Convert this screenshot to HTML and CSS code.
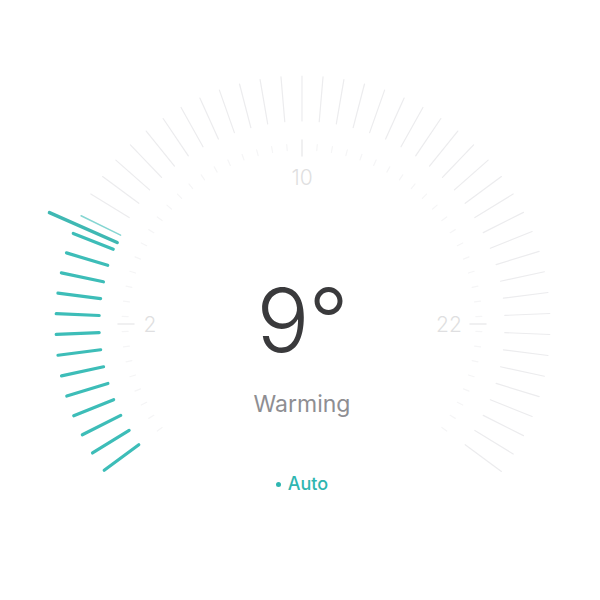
FILE: index.html
```html
<!DOCTYPE html>
<html>
<head>
<meta charset="utf-8">
<link rel="stylesheet" href="styles.css">
</head>
<body>
<div class="dial">
  <svg class="ticks" width="600" height="600" viewBox="0 0 600 600">
    <g transform="translate(302,324)">
      <g class="inner">
        <line x1="0" y1="-180" x2="0" y2="-174" transform="rotate(-126.486)"/>
        <line x1="0" y1="-180" x2="0" y2="-174" transform="rotate(-121.622)"/>
        <line x1="0" y1="-180" x2="0" y2="-174" transform="rotate(-116.757)"/>
        <line x1="0" y1="-180" x2="0" y2="-174" transform="rotate(-111.892)"/>
        <line x1="0" y1="-180" x2="0" y2="-174" transform="rotate(-107.027)"/>
        <line x1="0" y1="-180" x2="0" y2="-174" transform="rotate(-102.162)"/>
        <line x1="0" y1="-180" x2="0" y2="-174" transform="rotate(-97.297)"/>
        <line x1="0" y1="-180" x2="0" y2="-174" transform="rotate(-92.432)"/>
        <line x1="0" y1="-180" x2="0" y2="-174" transform="rotate(-87.568)"/>
        <line x1="0" y1="-180" x2="0" y2="-174" transform="rotate(-82.703)"/>
        <line x1="0" y1="-180" x2="0" y2="-174" transform="rotate(-77.838)"/>
        <line x1="0" y1="-180" x2="0" y2="-174" transform="rotate(-72.973)"/>
        <line x1="0" y1="-180" x2="0" y2="-174" transform="rotate(-68.108)"/>
        <line x1="0" y1="-180" x2="0" y2="-174" transform="rotate(-63.243)"/>
        <line x1="0" y1="-180" x2="0" y2="-174" transform="rotate(-58.378)"/>
        <line x1="0" y1="-180" x2="0" y2="-174" transform="rotate(-53.514)"/>
        <line x1="0" y1="-180" x2="0" y2="-174" transform="rotate(-48.649)"/>
        <line x1="0" y1="-180" x2="0" y2="-174" transform="rotate(-43.784)"/>
        <line x1="0" y1="-180" x2="0" y2="-174" transform="rotate(-38.919)"/>
        <line x1="0" y1="-180" x2="0" y2="-174" transform="rotate(-34.054)"/>
        <line x1="0" y1="-180" x2="0" y2="-174" transform="rotate(-29.189)"/>
        <line x1="0" y1="-180" x2="0" y2="-174" transform="rotate(-24.324)"/>
        <line x1="0" y1="-180" x2="0" y2="-174" transform="rotate(-19.459)"/>
        <line x1="0" y1="-180" x2="0" y2="-174" transform="rotate(-14.595)"/>
        <line x1="0" y1="-180" x2="0" y2="-174" transform="rotate(-9.730)"/>
        <line x1="0" y1="-180" x2="0" y2="-174" transform="rotate(-4.865)"/>
        <line x1="0" y1="-180" x2="0" y2="-174" transform="rotate(4.865)"/>
        <line x1="0" y1="-180" x2="0" y2="-174" transform="rotate(9.730)"/>
        <line x1="0" y1="-180" x2="0" y2="-174" transform="rotate(14.595)"/>
        <line x1="0" y1="-180" x2="0" y2="-174" transform="rotate(19.459)"/>
        <line x1="0" y1="-180" x2="0" y2="-174" transform="rotate(24.324)"/>
        <line x1="0" y1="-180" x2="0" y2="-174" transform="rotate(29.189)"/>
        <line x1="0" y1="-180" x2="0" y2="-174" transform="rotate(34.054)"/>
        <line x1="0" y1="-180" x2="0" y2="-174" transform="rotate(38.919)"/>
        <line x1="0" y1="-180" x2="0" y2="-174" transform="rotate(43.784)"/>
        <line x1="0" y1="-180" x2="0" y2="-174" transform="rotate(48.649)"/>
        <line x1="0" y1="-180" x2="0" y2="-174" transform="rotate(53.514)"/>
        <line x1="0" y1="-180" x2="0" y2="-174" transform="rotate(58.378)"/>
        <line x1="0" y1="-180" x2="0" y2="-174" transform="rotate(63.243)"/>
        <line x1="0" y1="-180" x2="0" y2="-174" transform="rotate(68.108)"/>
        <line x1="0" y1="-180" x2="0" y2="-174" transform="rotate(72.973)"/>
        <line x1="0" y1="-180" x2="0" y2="-174" transform="rotate(77.838)"/>
        <line x1="0" y1="-180" x2="0" y2="-174" transform="rotate(82.703)"/>
        <line x1="0" y1="-180" x2="0" y2="-174" transform="rotate(87.568)"/>
        <line x1="0" y1="-180" x2="0" y2="-174" transform="rotate(92.432)"/>
        <line x1="0" y1="-180" x2="0" y2="-174" transform="rotate(97.297)"/>
        <line x1="0" y1="-180" x2="0" y2="-174" transform="rotate(102.162)"/>
        <line x1="0" y1="-180" x2="0" y2="-174" transform="rotate(107.027)"/>
        <line x1="0" y1="-180" x2="0" y2="-174" transform="rotate(111.892)"/>
        <line x1="0" y1="-180" x2="0" y2="-174" transform="rotate(116.757)"/>
        <line x1="0" y1="-180" x2="0" y2="-174" transform="rotate(121.622)"/>
        <line x1="0" y1="-180" x2="0" y2="-174" transform="rotate(126.486)"/>
      </g>
      <g class="marks">
        <line x1="0" y1="-184" x2="0" y2="-168" transform="rotate(-90)"/>
        <line x1="0" y1="-184" x2="0" y2="-168" transform="rotate(0)"/>
        <line x1="0" y1="-184" x2="0" y2="-168" transform="rotate(90)"/>
      </g>
      <g class="outer">
        <line x1="0" y1="-248" x2="0" y2="-203" transform="rotate(-58.378)"/>
        <line x1="0" y1="-248" x2="0" y2="-203" transform="rotate(-53.514)"/>
        <line x1="0" y1="-248" x2="0" y2="-203" transform="rotate(-48.649)"/>
        <line x1="0" y1="-248" x2="0" y2="-203" transform="rotate(-43.784)"/>
        <line x1="0" y1="-248" x2="0" y2="-203" transform="rotate(-38.919)"/>
        <line x1="0" y1="-248" x2="0" y2="-203" transform="rotate(-34.054)"/>
        <line x1="0" y1="-248" x2="0" y2="-203" transform="rotate(-29.189)"/>
        <line x1="0" y1="-248" x2="0" y2="-203" transform="rotate(-24.324)"/>
        <line x1="0" y1="-248" x2="0" y2="-203" transform="rotate(-19.459)"/>
        <line x1="0" y1="-248" x2="0" y2="-203" transform="rotate(-14.595)"/>
        <line x1="0" y1="-248" x2="0" y2="-203" transform="rotate(-9.730)"/>
        <line x1="0" y1="-248" x2="0" y2="-203" transform="rotate(-4.865)"/>
        <line x1="0" y1="-248" x2="0" y2="-203" transform="rotate(0)"/>
        <line x1="0" y1="-248" x2="0" y2="-203" transform="rotate(4.865)"/>
        <line x1="0" y1="-248" x2="0" y2="-203" transform="rotate(9.730)"/>
        <line x1="0" y1="-248" x2="0" y2="-203" transform="rotate(14.595)"/>
        <line x1="0" y1="-248" x2="0" y2="-203" transform="rotate(19.459)"/>
        <line x1="0" y1="-248" x2="0" y2="-203" transform="rotate(24.324)"/>
        <line x1="0" y1="-248" x2="0" y2="-203" transform="rotate(29.189)"/>
        <line x1="0" y1="-248" x2="0" y2="-203" transform="rotate(34.054)"/>
        <line x1="0" y1="-248" x2="0" y2="-203" transform="rotate(38.919)"/>
        <line x1="0" y1="-248" x2="0" y2="-203" transform="rotate(43.784)"/>
        <line x1="0" y1="-248" x2="0" y2="-203" transform="rotate(48.649)"/>
        <line x1="0" y1="-248" x2="0" y2="-203" transform="rotate(53.514)"/>
        <line x1="0" y1="-248" x2="0" y2="-203" transform="rotate(58.378)"/>
        <line x1="0" y1="-248" x2="0" y2="-203" transform="rotate(63.243)"/>
        <line x1="0" y1="-248" x2="0" y2="-203" transform="rotate(68.108)"/>
        <line x1="0" y1="-248" x2="0" y2="-203" transform="rotate(72.973)"/>
        <line x1="0" y1="-248" x2="0" y2="-203" transform="rotate(77.838)"/>
        <line x1="0" y1="-248" x2="0" y2="-203" transform="rotate(82.703)"/>
        <line x1="0" y1="-248" x2="0" y2="-203" transform="rotate(87.568)"/>
        <line x1="0" y1="-248" x2="0" y2="-203" transform="rotate(92.432)"/>
        <line x1="0" y1="-248" x2="0" y2="-203" transform="rotate(97.297)"/>
        <line x1="0" y1="-248" x2="0" y2="-203" transform="rotate(102.162)"/>
        <line x1="0" y1="-248" x2="0" y2="-203" transform="rotate(107.027)"/>
        <line x1="0" y1="-248" x2="0" y2="-203" transform="rotate(111.892)"/>
        <line x1="0" y1="-248" x2="0" y2="-203" transform="rotate(116.757)"/>
        <line x1="0" y1="-248" x2="0" y2="-203" transform="rotate(121.622)"/>
        <line x1="0" y1="-248" x2="0" y2="-203" transform="rotate(126.486)"/>
      </g>
      <line class="trail" x1="0" y1="-246" x2="0" y2="-202" transform="rotate(-63.9)"/>
      <g class="active">
        <line x1="0" y1="-246" x2="0" y2="-203" transform="rotate(-68.4)"/>
        <line x1="0" y1="-246" x2="0" y2="-203" transform="rotate(-73.2)"/>
        <line x1="0" y1="-246" x2="0" y2="-203" transform="rotate(-78.0)"/>
        <line x1="0" y1="-246" x2="0" y2="-203" transform="rotate(-82.8)"/>
        <line x1="0" y1="-246" x2="0" y2="-203" transform="rotate(-87.6)"/>
        <line x1="0" y1="-246" x2="0" y2="-203" transform="rotate(-92.432)"/>
        <line x1="0" y1="-246" x2="0" y2="-203" transform="rotate(-97.297)"/>
        <line x1="0" y1="-246" x2="0" y2="-203" transform="rotate(-102.162)"/>
        <line x1="0" y1="-246" x2="0" y2="-203" transform="rotate(-107.027)"/>
        <line x1="0" y1="-246" x2="0" y2="-203" transform="rotate(-111.892)"/>
        <line x1="0" y1="-246" x2="0" y2="-203" transform="rotate(-116.757)"/>
        <line x1="0" y1="-246" x2="0" y2="-203" transform="rotate(-121.622)"/>
        <line x1="0" y1="-246" x2="0" y2="-203" transform="rotate(-126.486)"/>
      </g>
      <line class="pointer" x1="0" y1="-276" x2="0" y2="-202" transform="rotate(-66.2)"/>
      <g class="labels">
        <text x="0" y="-147">10</text>
        <text x="-152" y="0">2</text>
        <text x="147" y="0">22</text>
      </g>
    </g>
  </svg>
  <div class="readout">
    <div class="temp">9°</div>
    <div class="status">Warming</div>
    <div class="mode"><span class="dot"></span>Auto</div>
  </div>
</div>
</body>
</html>
```
FILE: styles.css
```css
html, body {
  margin: 0;
  padding: 0;
  background: #ffffff;
}

.dial {
  display: grid;
  width: 600px;
  height: 600px;
  font-family: Inter, "Liberation Sans", sans-serif;
}

.dial > * {
  grid-area: 1 / 1;
}

.ticks line {
  stroke-linecap: round;
}

.inner line {
  stroke: #f5f5f6;
  stroke-width: 1.2;
}

.marks line {
  stroke: #ebebed;
  stroke-width: 1.5;
}

.outer line {
  stroke: #ececee;
  stroke-width: 1.2;
}

.trail {
  stroke: #86d6d2;
  stroke-width: 1.5;
}

.active line {
  stroke: #3dbdb8;
  stroke-width: 3.2;
}

.pointer {
  stroke: #3fb8b3;
  stroke-width: 3.5;
}

.labels text {
  font-family: Inter, "Liberation Sans", sans-serif;
  font-weight: 300;
  font-size: 21px;
  fill: #dfdfe1;
  text-anchor: middle;
  dominant-baseline: central;
}

.readout {
  display: flex;
  flex-direction: column;
  align-items: center;
  padding-top: 276px;
  padding-left: 4px;
}

.temp {
  font-size: 88px;
  line-height: 88px;
  font-weight: 350;
  color: #3a3a3c;
  letter-spacing: -1px;
}

.status {
  margin-top: 29px;
  font-size: 23px;
  line-height: 23px;
  font-weight: 400;
  color: #8e8e92;
}

.mode {
  margin-top: 59px;
  display: flex;
  align-items: center;
  gap: 7px;
  font-size: 18px;
  line-height: 18px;
  font-weight: 500;
  color: #2fb6b1;
}

.dot {
  width: 5px;
  height: 5px;
  border-radius: 50%;
  background: #2fb6b1;
}
```
